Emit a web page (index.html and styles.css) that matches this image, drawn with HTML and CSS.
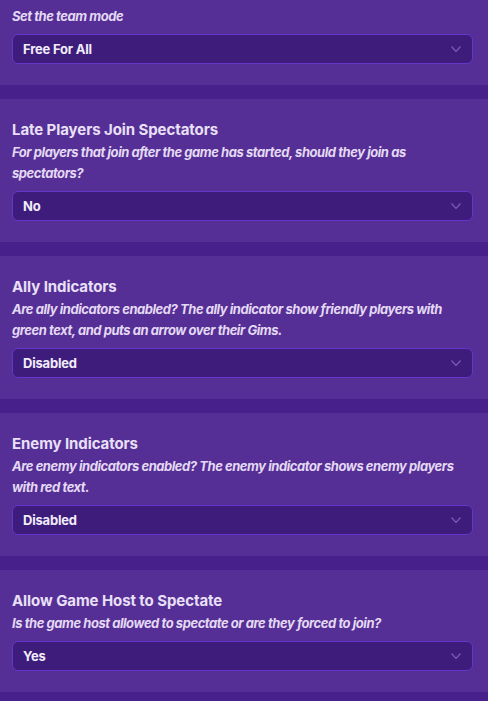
FILE: index.html
```html
<!DOCTYPE html>
<html>
<head>
<meta charset="utf-8">
<link rel="stylesheet" href="styles.css">
</head>
<body>
<div class="list">
  <section class="card">
    <h3 class="title">Teams</h3>
    <p class="desc">Set the team mode</p>
    <div class="select"><span>Free For All</span><svg class="chev" viewBox="0 0 10 6" width="10" height="6"><polyline points="0.5,0.5 5,5.5 9.5,0.5"/></svg></div>
  </section>
  <section class="card">
    <h3 class="title">Late Players Join Spectators</h3>
    <p class="desc">For players that join after the game has started, should they join as spectators?</p>
    <div class="select"><span>No</span><svg class="chev" viewBox="0 0 10 6" width="10" height="6"><polyline points="0.5,0.5 5,5.5 9.5,0.5"/></svg></div>
  </section>
  <section class="card">
    <h3 class="title">Ally Indicators</h3>
    <p class="desc">Are ally indicators enabled? The ally indicator show friendly players with green text, and puts an arrow over their Gims.</p>
    <div class="select"><span>Disabled</span><svg class="chev" viewBox="0 0 10 6" width="10" height="6"><polyline points="0.5,0.5 5,5.5 9.5,0.5"/></svg></div>
  </section>
  <section class="card">
    <h3 class="title">Enemy Indicators</h3>
    <p class="desc">Are enemy indicators enabled? The enemy indicator shows enemy players with red text.</p>
    <div class="select"><span>Disabled</span><svg class="chev" viewBox="0 0 10 6" width="10" height="6"><polyline points="0.5,0.5 5,5.5 9.5,0.5"/></svg></div>
  </section>
  <section class="card">
    <h3 class="title">Allow Game Host to Spectate</h3>
    <p class="desc">Is the game host allowed to spectate or are they forced to join?</p>
    <div class="select"><span>Yes</span><svg class="chev" viewBox="0 0 10 6" width="10" height="6"><polyline points="0.5,0.5 5,5.5 9.5,0.5"/></svg></div>
  </section>
</div>
</body>
</html>
```

FILE: styles.css
```css
html, body {
  margin: 0;
  padding: 0;
  background: #47208b;
  height: 100%;
  overflow: hidden;
}
body {
  font-family: Inter, "Noto Sans", sans-serif;
  color: #ece4f8;
}
.list {
  display: flex;
  flex-direction: column;
  gap: 14px;
  margin-top: -37px;
}
.card {
  background: #552f96;
  padding: 20px 15px 21px 12px;
}
.title {
  margin: 0;
  font-size: 15px;
  line-height: 22px;
  font-weight: 700;
  letter-spacing: -0.08px;
  color: #e9e0f6;
}
.desc {
  margin: 1px 0 7px;
  font-size: 13px;
  line-height: 21px;
  font-style: italic;
  font-weight: 700;
  letter-spacing: -0.45px;
  color: #e4d9f3;
}
.select {
  height: 30px;
  box-sizing: border-box;
  display: flex;
  align-items: center;
  justify-content: space-between;
  background: #3e1c7c;
  border: 1px solid #6536c9;
  border-radius: 6px;
  padding: 0 11px 0 10px;
  font-size: 13px;
  font-weight: 700;
  letter-spacing: -0.2px;
  color: #f1ecfa;
}
.chev {
  fill: none;
  stroke: #7a5bb4;
  stroke-width: 1.2;
}
```
